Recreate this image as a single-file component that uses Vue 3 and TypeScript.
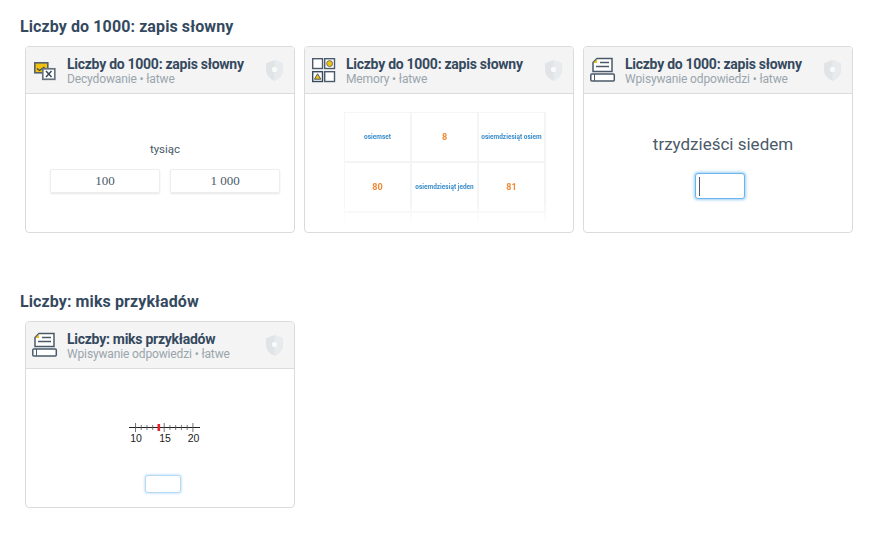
<script setup lang="ts">
const memory: { t: string; n: boolean }[] = [
  { t: 'osiemset', n: false },
  { t: '8', n: true },
  { t: 'osiemdziesiąt osiem', n: false },
  { t: '80', n: true },
  { t: 'osiemdziesiąt jeden', n: false },
  { t: '81', n: true },
  { t: '', n: false },
  { t: '', n: false },
  { t: '', n: false },
]
const ticks: number[] = [0, 1, 2, 3, 4, 5, 6, 7, 8, 9, 10]
</script>

<template>
  <div class="page">
    <section class="group">
      <h2 class="heading">Liczby do 1000: zapis słowny</h2>
      <div class="cards">
        <article class="card">
          <header class="head">
            <svg class="icon" viewBox="0 0 28 24" width="28" height="24">
              <rect x="2.800" y="4.800" width="13" height="10" fill="#f2c10f" stroke="#56616c" stroke-width="1.600" />
              <path d="M5 10.500l2.500 2 5-3.500" fill="none" stroke="#3a4a5a" stroke-width="1.400" />
              <rect x="10.800" y="10.800" width="12" height="10.500" fill="#fff" stroke="#66727e" stroke-width="1.700" />
              <path d="M14 13l5.500 6M19.500 13l-5.500 6" stroke="#34495e" stroke-width="1.500" />
            </svg>
            <div class="titles">
              <div class="title">Liczby do 1000: zapis słowny</div>
              <div class="sub">Decydowanie • łatwe</div>
            </div>
            <svg class="shield" viewBox="0 0 18 22" width="19" height="23">
              <path d="M9 1l8 3v7c0 5-4 8-8 10-4-2-8-5-8-10V4z" fill="#e0e4e7" />
              <path d="M9 1l8 3v7c0 5-4 8-8 10z" fill="#e8ebed" />
              <circle cx="9" cy="10" r="2.500" fill="#f8f9f9" />
            </svg>
          </header>
          <div class="body decide">
            <div class="prompt">tysiąc</div>
            <div class="answers">
              <div class="answer">100</div>
              <div class="answer">1 000</div>
            </div>
          </div>
        </article>

        <article class="card">
          <header class="head">
            <svg class="icon" viewBox="0 0 28 28" width="28" height="28">
              <rect x="1.700" y="2.700" width="9.800" height="9.800" fill="#fff" stroke="#4a5a6a" stroke-width="1.400" />
              <rect x="13.700" y="2.700" width="9.800" height="9.800" fill="#fff" stroke="#4a5a6a" stroke-width="1.400" />
              <circle cx="18.600" cy="7.600" r="3" fill="#f2c10f" stroke="#4a5a6a" stroke-width="0.800" />
              <rect x="1.700" y="15.700" width="9.800" height="9.800" fill="#fff" stroke="#34495e" stroke-width="1.400" />
              <path d="M6.600 17.800l3.200 5.400H3.400z" fill="#f2c10f" stroke="#34495e" stroke-width="0.900" />
              <rect x="13.700" y="15.700" width="9.800" height="9.800" fill="#fff" stroke="#4a5a6a" stroke-width="1.400" />
            </svg>
            <div class="titles">
              <div class="title">Liczby do 1000: zapis słowny</div>
              <div class="sub">Memory • łatwe</div>
            </div>
            <svg class="shield" viewBox="0 0 18 22" width="19" height="23">
              <path d="M9 1l8 3v7c0 5-4 8-8 10-4-2-8-5-8-10V4z" fill="#e0e4e7" />
              <path d="M9 1l8 3v7c0 5-4 8-8 10z" fill="#e8ebed" />
              <circle cx="9" cy="10" r="2.500" fill="#f8f9f9" />
            </svg>
          </header>
          <div class="body memory">
            <div class="grid">
              <div v-for="(c, i) in memory" :key="i" class="cell" :class="{ num: c.n }">{{ c.t }}</div>
            </div>
          </div>
        </article>

        <article class="card">
          <header class="head">
            <svg class="icon" viewBox="0 0 28 26" width="28" height="26">
              <path d="M7 1.500h15v13H3V5.500z" fill="#fff" stroke="#4a5a6a" stroke-width="1.500" />
              <path d="M7 2v4H3.500z" fill="#f2c10f" />
              <path d="M10 5.500h9M6 9.500h13" stroke="#4a5a6a" stroke-width="1.300" />
              <rect x="0.800" y="17" width="23.500" height="7" rx="1" fill="#fff" stroke="#4a5a6a" stroke-width="1.500" />
              <path d="M4.500 17v7" stroke="#4a5a6a" stroke-width="1" />
            </svg>
            <div class="titles">
              <div class="title">Liczby do 1000: zapis słowny</div>
              <div class="sub">Wpisywanie odpowiedzi • łatwe</div>
            </div>
            <svg class="shield" viewBox="0 0 18 22" width="19" height="23">
              <path d="M9 1l8 3v7c0 5-4 8-8 10-4-2-8-5-8-10V4z" fill="#e0e4e7" />
              <path d="M9 1l8 3v7c0 5-4 8-8 10z" fill="#e8ebed" />
              <circle cx="9" cy="10" r="2.500" fill="#f8f9f9" />
            </svg>
          </header>
          <div class="body typing">
            <div class="big">trzydzieści siedem</div>
            <div class="input"><span class="caret"></span></div>
          </div>
        </article>
      </div>
    </section>

    <section class="group second">
      <h2 class="heading">Liczby: miks przykładów</h2>
      <div class="cards">
        <article class="card">
          <header class="head">
            <svg class="icon" viewBox="0 0 28 26" width="28" height="26">
              <path d="M7 1.500h15v13H3V5.500z" fill="#fff" stroke="#4a5a6a" stroke-width="1.500" />
              <path d="M7 2v4H3.500z" fill="#f2c10f" />
              <path d="M10 5.500h9M6 9.500h13" stroke="#4a5a6a" stroke-width="1.300" />
              <rect x="0.800" y="17" width="23.500" height="7" rx="1" fill="#fff" stroke="#4a5a6a" stroke-width="1.500" />
              <path d="M4.500 17v7" stroke="#4a5a6a" stroke-width="1" />
            </svg>
            <div class="titles">
              <div class="title">Liczby: miks przykładów</div>
              <div class="sub">Wpisywanie odpowiedzi • łatwe</div>
            </div>
            <svg class="shield" viewBox="0 0 18 22" width="19" height="23">
              <path d="M9 1l8 3v7c0 5-4 8-8 10-4-2-8-5-8-10V4z" fill="#e0e4e7" />
              <path d="M9 1l8 3v7c0 5-4 8-8 10z" fill="#e8ebed" />
              <circle cx="9" cy="10" r="2.500" fill="#f8f9f9" />
            </svg>
          </header>
          <div class="body mix">
            <svg class="line" viewBox="0 0 72 26" width="72" height="26">
              <path d="M0 5.500h71" stroke="#222" stroke-width="1" />
              <path
                v-for="t in ticks"
                :key="t"
                :d="`M${6.500 + t * 5.740} ${t % 5 === 0 ? 1 : 3}V${t % 5 === 0 ? 10 : 8}`"
                stroke="#555"
                stroke-width="0.800"
              />
              <rect x="28.500" y="2" width="2.600" height="7" fill="#e8202a" />
              <text x="7" y="20" class="lbl" text-anchor="middle">10</text>
              <text x="36" y="20" class="lbl" text-anchor="middle">15</text>
              <text x="64.500" y="20" class="lbl" text-anchor="middle">20</text>
            </svg>
            <div class="input small"></div>
          </div>
        </article>
      </div>
    </section>
  </div>
</template>

<style scoped>
.page {
  width: 880px;
  height: 541px;
  box-sizing: border-box;
  padding: 17px 0 0 20px;
  font-family: Roboto, "Liberation Sans", sans-serif;
  color: #34495e;
  overflow: hidden;
}
.group.second {
  margin-top: 59px;
}
.heading {
  margin: 0 0 9px;
  font-size: 16px;
  line-height: 20px;
  font-weight: 700;
  letter-spacing: 0.1px;
  color: #34495e;
}
.cards {
  display: flex;
  gap: 9px;
  padding-left: 5px;
}
.card {
  width: 270px;
  height: 187px;
  box-sizing: border-box;
  border: 1px solid #d9dcdd;
  border-radius: 4px;
  background: #fff;
  overflow: hidden;
  display: flex;
  flex-direction: column;
}
.head {
  height: 47px;
  flex: none;
  box-sizing: border-box;
  background: #f4f4f4;
  border-bottom: 1px solid #d9dcdd;
  display: flex;
  align-items: center;
  padding: 0 10px 0 6px;
}
.icon {
  flex: none;
  width: 28px;
  margin-right: 7px;
}
.titles {
  flex: 1;
  min-width: 0;
  padding-top: 1px;
}
.title {
  font-size: 14px;
  line-height: 16px;
  font-weight: 700;
  letter-spacing: -0.27px;
  color: #34495e;
  white-space: nowrap;
}
.sub {
  font-size: 12px;
  line-height: 14px;
  letter-spacing: -0.14px;
  color: #9aa5ad;
  white-space: nowrap;
}
.shield {
  flex: none;
}
.body {
  flex: 1;
  min-height: 0;
  display: flex;
  flex-direction: column;
  align-items: center;
  padding-left: 10px;
}
.decide {
  padding-top: 48px;
}
.prompt {
  font-size: 11.500px;
  line-height: 14px;
  color: #4a5a6a;
}
.answers {
  display: flex;
  gap: 10px;
  margin-top: 13px;
}
.answer {
  width: 110px;
  height: 24px;
  box-sizing: border-box;
  border: 1px solid #eceeef;
  border-radius: 2px;
  box-shadow: 0 1px 2px rgba(0, 0, 0, 0.1);
  font-family: "Liberation Serif", serif;
  font-size: 13px;
  line-height: 22px;
  text-align: center;
  color: #4a5a6a;
}
.memory {
  padding-top: 18px;
  padding-left: 12px;
}
.grid {
  width: 201px;
  display: grid;
  grid-template-columns: repeat(3, 67px);
  grid-auto-rows: 50px;
  border-top: 1px solid #f4f5f6;
  border-left: 1px solid #f4f5f6;
  height: 112px;
  overflow: hidden;
  -webkit-mask-image: linear-gradient(to bottom, #000 80%, transparent);
  mask-image: linear-gradient(to bottom, #000 80%, transparent);
}
.cell {
  box-sizing: border-box;
  border-right: 2px solid #f3f4f5;
  border-bottom: 2px solid #f3f4f5;
  display: flex;
  align-items: center;
  justify-content: center;
  font-size: 6.500px;
  font-weight: 700;
  color: #3a8ccb;
  white-space: nowrap;
}
.cell.num {
  font-size: 9px;
  font-weight: 700;
  color: #ee8a35;
}
.typing {
  padding-top: 39px;
}
.big {
  font-size: 17px;
  line-height: 22px;
  color: #4a5a6a;
}
.input {
  width: 50px;
  height: 26px;
  margin-top: 18px;
  margin-right: 6px;
  box-sizing: border-box;
  border: 1px solid #6cb4ec;
  border-radius: 3px;
  box-shadow: 0 0 3px 1px rgba(80, 165, 235, 0.55);
  display: flex;
  align-items: center;
  padding-left: 3px;
  background: #fff;
}
.caret {
  width: 1px;
  height: 19px;
  background: #4a5a6a;
}
.mix {
  padding-top: 53px;
}
.line {
  flex: none;
}
.lbl {
  font-family: "Liberation Sans", sans-serif;
  font-size: 10.500px;
  fill: #222;
}
.input.small {
  width: 36px;
  height: 18px;
  margin-top: 27px;
  margin-right: 4px;
  border-color: #b5daf5;
  box-shadow: 0 0 2px 1px rgba(80, 165, 235, 0.25);
}
</style>
